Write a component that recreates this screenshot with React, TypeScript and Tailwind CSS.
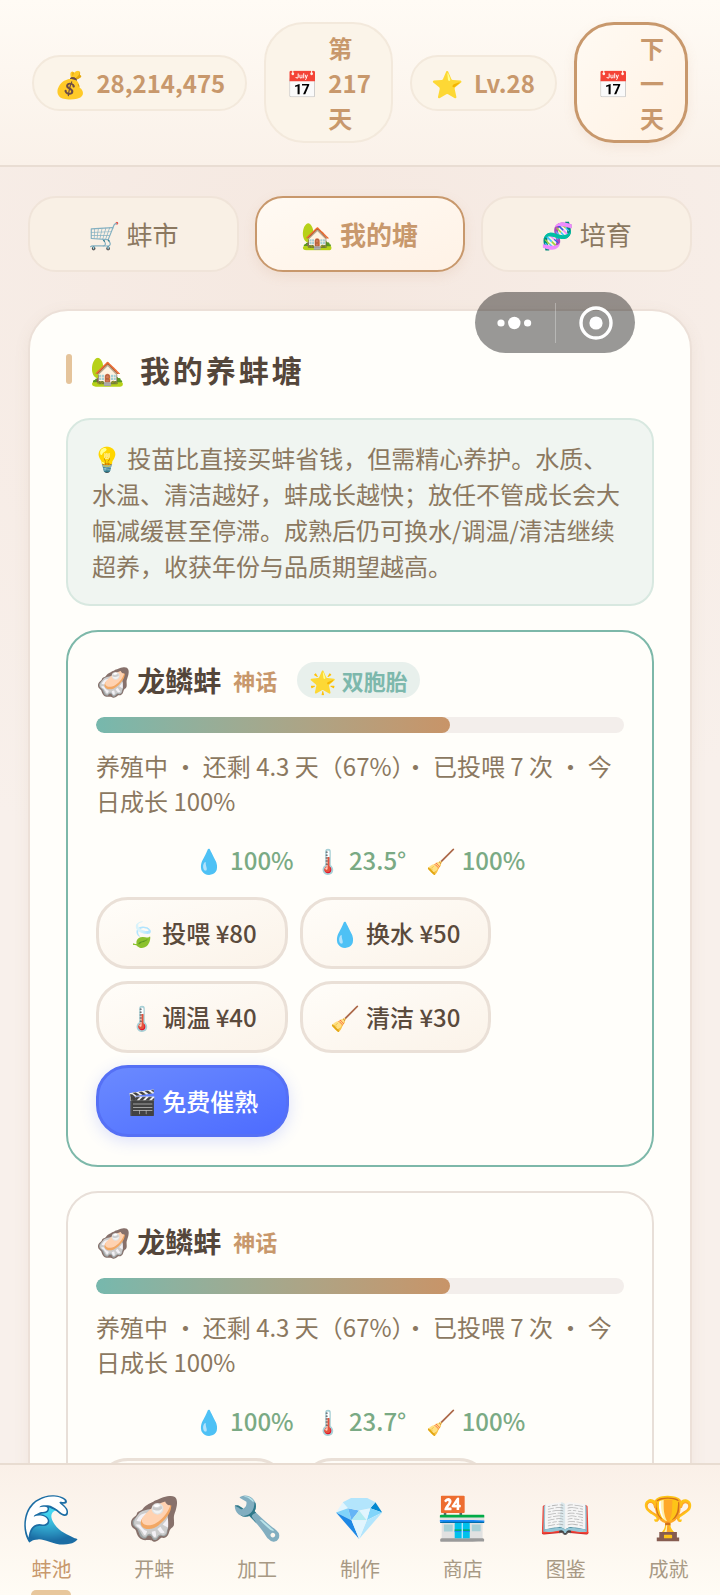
import { useState } from 'react';
import clsx from 'clsx';

interface Pond {
  id: number;
  name: string;
  rarity: string;
  twin: boolean;
  daysLeft: number;
  progress: number;
  feedCount: number;
  growth: number;
  water: number;
  temperature: number;
  clean: number;
}

const ponds: Pond[] = [
  { id: 1, name: '龙鳞蚌', rarity: '神话', twin: true, daysLeft: 4.3, progress: 67, feedCount: 7, growth: 100, water: 100, temperature: 23.5, clean: 100 },
  { id: 2, name: '龙鳞蚌', rarity: '神话', twin: false, daysLeft: 4.3, progress: 67, feedCount: 7, growth: 100, water: 100, temperature: 23.7, clean: 100 },
];

const tabs = [
  { id: 'market', icon: '🛒', label: '蚌市' },
  { id: 'pond', icon: '🏡', label: '我的塘' },
  { id: 'breed', icon: '🧬', label: '培育' },
];

const actions = [
  { icon: '🍃', label: '投喂', cost: 80 },
  { icon: '💧', label: '换水', cost: 50 },
  { icon: '🌡️', label: '调温', cost: 40 },
  { icon: '🧹', label: '清洁', cost: 30 },
];

const navItems = [
  { icon: '🌊', label: '蚌池' },
  { icon: '🦪', label: '开蚌' },
  { icon: '🔧', label: '加工' },
  { icon: '💎', label: '制作' },
  { icon: '🏪', label: '商店' },
  { icon: '📖', label: '图鉴' },
  { icon: '🏆', label: '成就' },
];

const pill = 'flex items-center gap-2.5 text-2xl/[35px] font-bold text-[#c8986c]';
const statPill = 'border-2 border-[#f3e9dc] bg-[#fbf4e9] px-5';

const Header = () => (
  <header className="flex items-center justify-between gap-3.5 border-b-2 border-[#e9ddd3] bg-linear-to-b from-[#fffbf5] to-[#faf1e9] px-8 py-[22px]">
    <div className={clsx(pill, statPill, 'h-14 rounded-[28px]')}>
      <span className="text-[26px]">💰</span>
      <span>28,214,475</span>
    </div>
    <div className={clsx(pill, statPill, 'rounded-[40px] py-1.5')}>
      <span className="text-[26px]">📅</span>
      <span className="w-min">第 217 天</span>
    </div>
    <div className={clsx(pill, statPill, 'h-14 rounded-[28px]')}>
      <span className="text-[26px]">⭐</span>
      <span>Lv.28</span>
    </div>
    <button className={clsx(pill, 'rounded-[40px] border-3 border-[#c8986c] bg-linear-to-br from-[#fffaf3] to-[#fff2e4] px-[21px] py-[5px] text-left shadow-[0_4px_12px_rgba(200,150,106,0.12)]')}>
      <span className="text-[26px]">📅</span>
      <span className="w-min">下一天</span>
    </button>
  </header>
);

const PondCard = ({ pond }: { pond: Pond }) => (
  <article className={clsx('rounded-[32px] border-2 p-7', pond.twin ? 'border-[#7db8a9]' : 'border-[#e8dfd8]')}>
    <div className="flex h-10 items-center">
      <h3 className="text-[28px]/10 font-bold text-[#54463a]">{`🦪 ${pond.name}`}</h3>
      <span className="ml-3 text-[22px]/8 font-bold text-[#c8986c]">{pond.rarity}</span>
      {pond.twin && (
        <span className="ml-5 rounded-full bg-[#e8f0ec] px-3 text-[22px]/9 font-bold text-[#7db8ac]">🌟 双胞胎</span>
      )}
    </div>

    <div className="mt-[17px] h-4 overflow-hidden rounded-full bg-[#f3eeeb]">
      <div
        className="h-full rounded-full bg-linear-to-r from-[#76b8ad] to-[#c89468]"
        style={{ width: `${pond.progress}%` }}
      ></div>
    </div>

    <p className="mt-[15px] text-2xl/[35px] text-[#8b7860]">
      {`养殖中 ・ 还剩 ${pond.daysLeft} 天（${pond.progress}%）・ 已投喂 ${pond.feedCount} 次 ・ 今日成长 ${pond.growth}%`}
    </p>

    <div className="mt-6 flex justify-center gap-5 text-2xl/[35px] font-medium text-[#7aaa84]">
      <span>{`💧 ${pond.water}%`}</span>
      <span>{`🌡️ ${pond.temperature}°`}</span>
      <span>{`🧹 ${pond.clean}%`}</span>
    </div>

    <div className="mt-5 flex flex-wrap gap-3">
      {actions.map((action) => (
        <button
          key={action.label}
          className="rounded-[32px] border-3 border-[#eae0d7] bg-linear-to-br from-[#fffdf9] to-[#fbf3e9] px-7 py-4 text-2xl/[34px] font-medium text-[#5a4a3c]"
        >
          {`${action.icon} ${action.label} ¥${action.cost}`}
        </button>
      ))}
      <button className="rounded-[32px] border-3 border-[#5570f5] bg-linear-to-br from-[#6b8aff] to-[#4d6bff] px-7 py-4 text-2xl/[34px] font-medium text-white shadow-[0_4px_16px_rgba(77,107,255,0.2)]">
        🎬 免费催熟
      </button>
    </div>
  </article>
);

const Capsule = () => (
  <div className="absolute top-[292px] right-[85px] flex h-[61px] w-40 items-center rounded-full bg-black/40">
    <button aria-label="更多" className="flex flex-1 justify-center">
      <svg viewBox="0 0 36 14" className="h-3.5 w-9 fill-white">
        <circle cx="4" cy="7" r="3.6" />
        <circle cx="17.3" cy="7" r="6.2" />
        <circle cx="30.6" cy="7" r="3.6" />
      </svg>
    </button>
    <span className="h-10 w-px bg-white/30"></span>
    <button aria-label="关闭" className="flex flex-1 justify-center">
      <svg viewBox="0 0 36 36" className="size-9">
        <circle cx="19" cy="18" r="15" fill="none" stroke="white" strokeWidth="3.4" />
        <circle cx="19" cy="18" r="6.6" fill="white" />
      </svg>
    </button>
  </div>
);

const App = () => {
  const [tab, setTab] = useState('pond');
  const [page, setPage] = useState('蚌池');

  return (
    <div className="relative flex h-screen flex-col overflow-hidden bg-[#f8f0eb] bg-[radial-gradient(circle_at_45%_18%,#f5e8e0_0%,#f8f0eb_45%)] font-['Noto_Sans_CJK_SC','Noto_Color_Emoji',sans-serif]">
      <Header />

      <main className="flex-1 overflow-y-auto px-7 [scrollbar-width:none]">
        <div className="grid grid-cols-3 gap-4 pt-[29px]">
          {tabs.map((t) => (
            <button
              key={t.id}
              onClick={() => setTab(t.id)}
              className={clsx(
                'rounded-[28px] border-2 py-[17px] text-[26px]/[38px]',
                tab === t.id
                  ? 'border-[#c8986c] bg-linear-to-br from-[#fffaf3] to-[#fff2e6] font-bold text-[#c8986c] shadow-[0_4px_12px_rgba(200,150,106,0.15)]'
                  : 'border-[#f0e4d9] bg-[#f9f0e5] text-[#8b7860]'
              )}
            >
              {`${t.icon} ${t.label}`}
            </button>
          ))}
        </div>

        <section className="mt-[37px] rounded-[40px] border-2 border-[#ece0d8] bg-[#fffefa] p-9 shadow-[0_4px_16px_rgba(140,110,90,0.08)]">
          <div className="flex items-center">
            <span className="h-[30px] w-1.5 rounded-full bg-[#e5c49b]"></span>
            <span className="ml-[18px] text-[28px]/[44px]">🏡</span>
            <h2 className="ml-[15px] text-3xl/[44px] font-bold tracking-widest text-[#54463a]">我的养蚌塘</h2>
          </div>

          <p className="mt-[27px] rounded-3xl border-2 border-[#d8e8e0] bg-[#f0f5f1] px-6 py-5 text-2xl/9 text-[#8b7860]">
            💡 投苗比直接买蚌省钱，但需精心养护。水质、水温、清洁越好，蚌成长越快；放任不管成长会大幅减缓甚至停滞。成熟后仍可换水/调温/清洁继续超养，收获年份与品质期望越高。
          </p>

          <div className="mt-6 flex flex-col gap-6">
            {ponds.map((pond) => (
              <PondCard key={pond.id} pond={pond} />
            ))}
          </div>
        </section>
      </main>

      <nav className="grid shrink-0 grid-cols-7 border-t-2 border-[#e8dcd1] bg-linear-to-b from-[#faf0e8] to-[#fffcf5]">
        {navItems.map((item) => (
          <button
            key={item.label}
            onClick={() => setPage(item.label)}
            className={clsx(
              'flex flex-col items-center pt-[19px]',
              page === item.label ? 'text-[#c8986c]' : 'text-[#a89984]'
            )}
          >
            <span className={clsx('leading-[62px]', page === item.label ? 'text-5xl/[62px]' : 'text-[42px]/[62px]')}>{item.icon}</span>
            <span className="mt-2 text-xl/[30px]">{item.label}</span>
            <span className={clsx('mt-1.5 h-[5px] w-10 rounded-t-md', page === item.label && 'bg-[#e8c79c]')}></span>
          </button>
        ))}
      </nav>

      <Capsule />
    </div>
  );
};

export default App;
